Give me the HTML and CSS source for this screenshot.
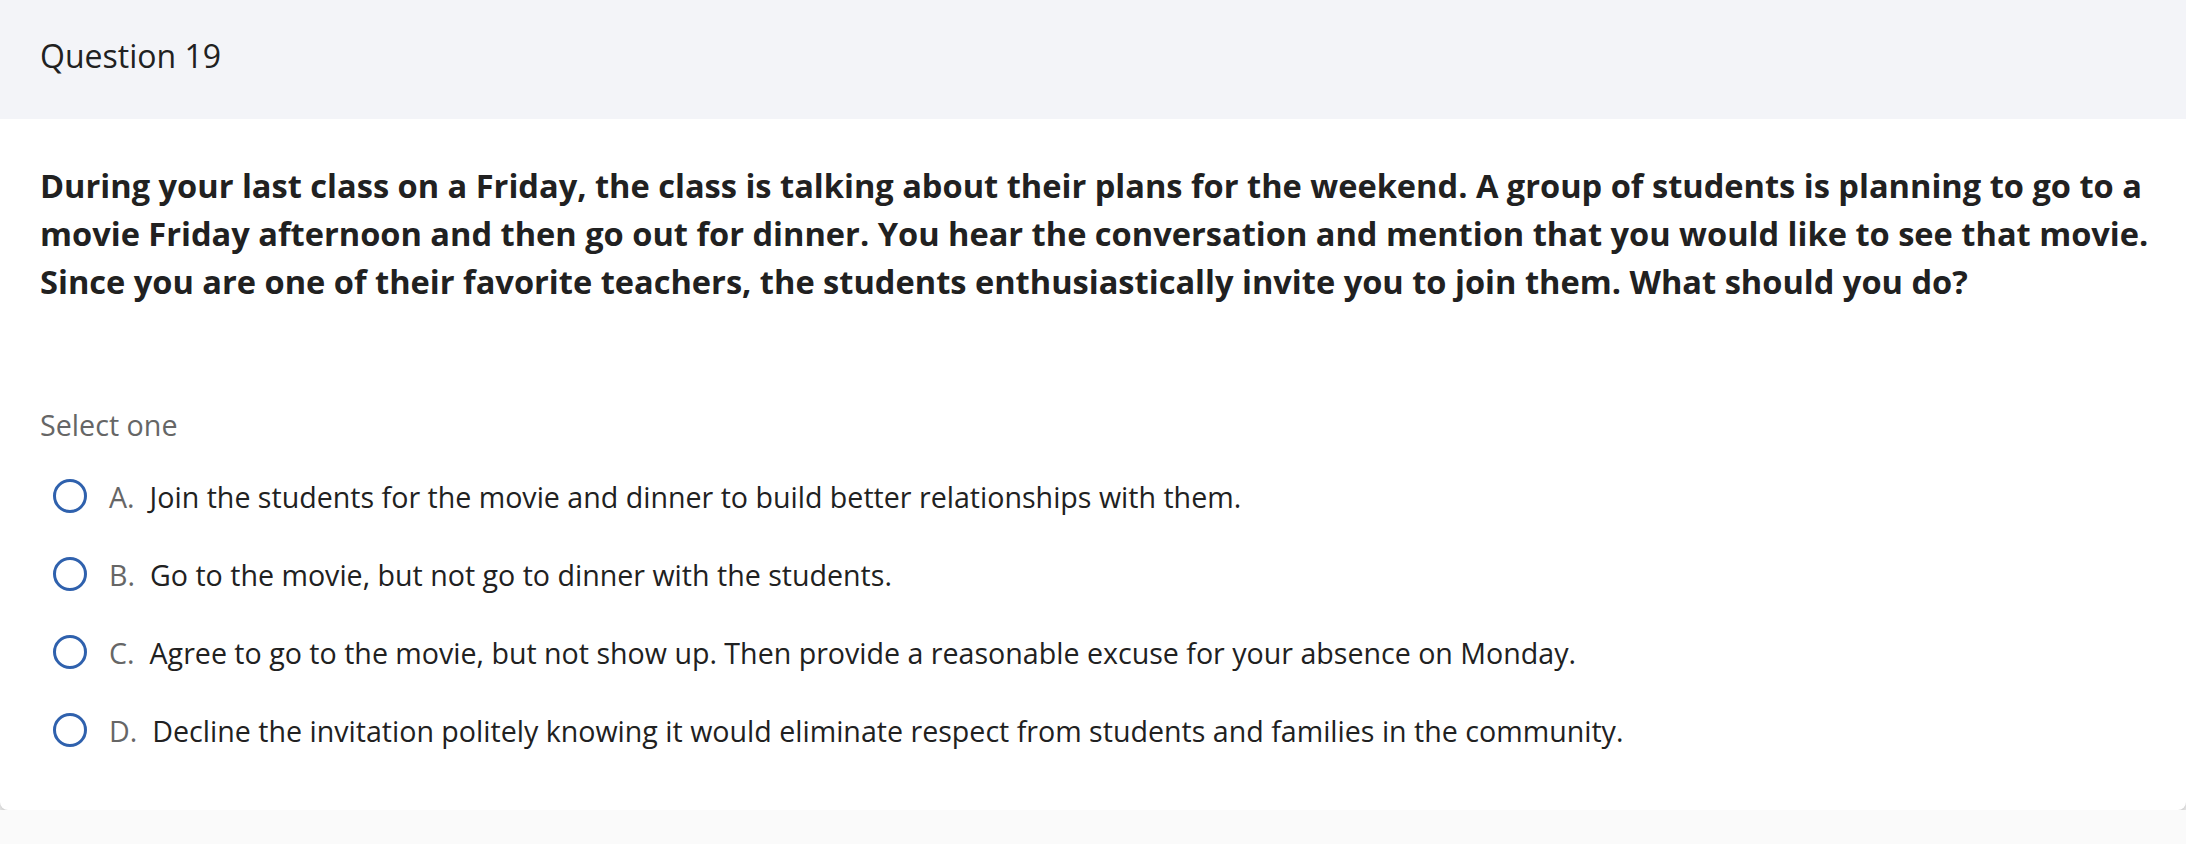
FILE: index.html
```html
<!DOCTYPE html>
<html lang="en">
<head>
<meta charset="utf-8">
<title>Question 19</title>
<link rel="stylesheet" href="styles.css">
</head>
<body>
<div class="page">
  <div class="card">
    <div class="header">
      <h2 class="qnum">Question 19</h2>
    </div>
    <div class="body">
      <p class="stem">During your last class on a Friday, the class is talking about their plans for the weekend. A group of students is planning to go to a movie Friday afternoon and then go out for dinner. You hear the conversation and mention that you would like to see that movie. Since you are one of their favorite teachers, the students enthusiastically invite you to join them. What should you do?</p>
      <div class="select">Select one</div>
      <ul class="options">
        <li class="option"><span class="radio"></span><span class="letter">A.</span><span class="text">Join the students for the movie and dinner to build better relationships with them.</span></li>
        <li class="option"><span class="radio"></span><span class="letter">B.</span><span class="text">Go to the movie, but not go to dinner with the students.</span></li>
        <li class="option"><span class="radio"></span><span class="letter">C.</span><span class="text">Agree to go to the movie, but not show up. Then provide a reasonable excuse for your absence on Monday.</span></li>
        <li class="option"><span class="radio"></span><span class="letter">D.</span><span class="text">Decline the invitation politely knowing it would eliminate respect from students and families in the community.</span></li>
      </ul>
    </div>
  </div>
</div>
</body>
</html>
```

FILE: styles.css
```css
html, body {
  margin: 0;
  padding: 0;
  background: #fafafa;
  font-family: "Open Sans", "Noto Sans", sans-serif;
  color: #212121;
}
.page {
  width: 100%;
}
.card {
  background: #ffffff;
  border-radius: 0 0 8px 8px;
  box-shadow: 0 4px 10px rgba(0, 0, 0, 0.26);
  overflow: hidden;
}
.header {
  background: #f3f4f8;
  height: 119px;
  box-sizing: border-box;
  display: flex;
  align-items: flex-start;
  padding: 34px 40px 0 40px;
}
.qnum {
  margin: 0;
  font-size: 32px;
  font-weight: 400;
  line-height: 1.362;
  color: #212121;
}
.body {
  padding: 43px 24px 41px 40px;
}
.stem {
  margin: 0;
  font-size: 32.6px;
  font-weight: 700;
  line-height: 48px;
  color: #212121;
}
.select {
  margin-top: 99px;
  font-size: 28.7px;
  line-height: 39px;
  color: #666666;
}
.options {
  list-style: none;
  margin: 13px 0 0 0;
  padding: 0;
}
.option {
  display: flex;
  align-items: center;
  height: 78px;
  font-size: 28.6px;
  line-height: 39px;
}
.radio {
  width: 28px;
  height: 28px;
  border: 3.5px solid #2f61ad;
  border-radius: 50%;
  margin-left: 13px;
  margin-right: 22px;
  flex: none;
}
.letter {
  color: #666666;
  margin-right: 15px;
}
.text {
  color: #212121;
}
```
